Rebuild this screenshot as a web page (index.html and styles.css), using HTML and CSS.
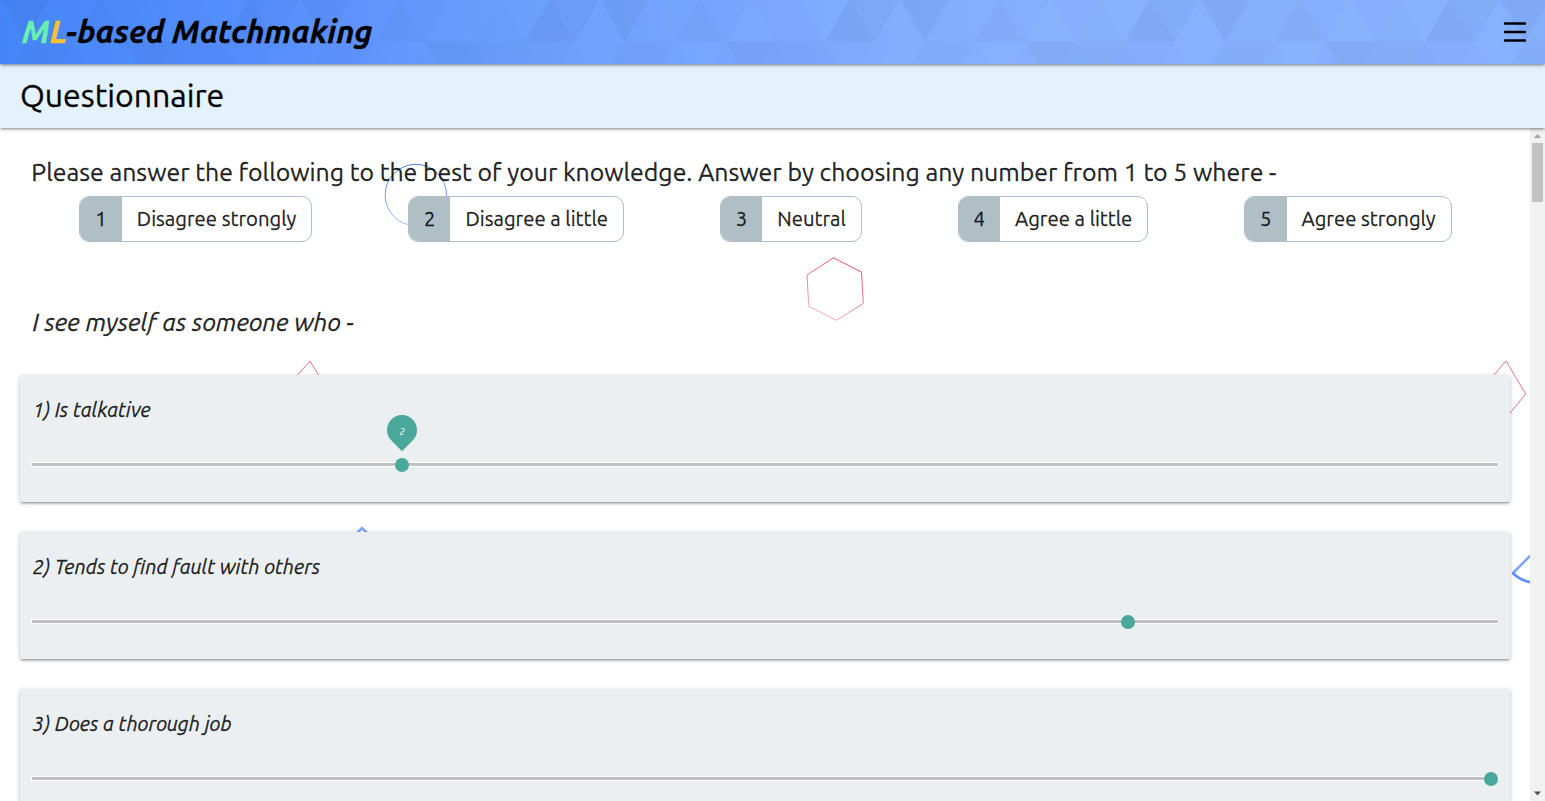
FILE: index.html
```html
<!DOCTYPE html>
<html lang="en">
<head>
<meta charset="utf-8">
<title>ML-based Matchmaking</title>
<link rel="stylesheet" href="styles.css">
</head>
<body>
<header class="topbar">
  <svg class="topbar-pattern" width="100%" height="64" aria-hidden="true">
    <defs>
      <pattern id="tri" x="-75" y="-1.6" width="300" height="86.6" patternUnits="userSpaceOnUse">
        <g fill="#1a3a7a" opacity=".65">
          <path d="M0 43.3 25 0 50 43.3z" fill-opacity=".11"/>
          <path d="M25 0H75L50 43.3z" fill-opacity=".085"/>
          <path d="M75 0H125L100 43.3z" fill-opacity=".11"/>
          <path d="M-25 0H25L0 43.3zM275 0H325L300 43.3z" fill-opacity=".01"/>
          <path d="M50 43.3 75 0 100 43.3z" fill-opacity=".015"/>
          <path d="M100 43.3 125 0 150 43.3z" fill-opacity=".035"/>
          <path d="M125 0H175L150 43.3z" fill-opacity=".035"/>
          <path d="M150 43.3 175 0 200 43.3z" fill-opacity=".075"/>
          <path d="M175 0H225L200 43.3z" fill-opacity=".04"/>
          <path d="M200 43.3 225 0 250 43.3z" fill-opacity=".01"/>
          <path d="M225 0H275L250 43.3z" fill-opacity=".02"/>
          <path d="M250 43.3 275 0 300 43.3z" fill-opacity=".03"/>
          <path d="M0 43.3H50L25 86.6z" fill-opacity=".045"/>
          <path d="M25 86.6 50 43.3 75 86.6z" fill-opacity=".025"/>
          <path d="M50 43.3H100L75 86.6z" fill-opacity=".015"/>
          <path d="M75 86.6 100 43.3 125 86.6z" fill-opacity=".08"/>
          <path d="M100 43.3H150L125 86.6z" fill-opacity=".07"/>
          <path d="M125 86.6 150 43.3 175 86.6z" fill-opacity=".03"/>
          <path d="M150 43.3H200L175 86.6z" fill-opacity=".01"/>
          <path d="M175 86.6 200 43.3 225 86.6z" fill-opacity=".02"/>
          <path d="M200 43.3H250L225 86.6z" fill-opacity=".1"/>
          <path d="M225 86.6 250 43.3 275 86.6z" fill-opacity=".085"/>
          <path d="M250 43.3H300L275 86.6z" fill-opacity=".07"/>
          <path d="M-25 86.6 0 43.3 25 86.6zM275 86.6 300 43.3 325 86.6z" fill-opacity=".055"/>
        </g>
      </pattern>
    </defs>
    <rect width="100%" height="64" fill="url(#tri)"/>
  </svg>
  <h1 class="brand"><span class="brand-m">M</span><span class="brand-l">L</span>-based Matchmaking</h1>
  <svg class="menu-icon" width="24" height="22" viewBox="0 0 24 22" fill="none" stroke="#000" stroke-width="2.4" stroke-linecap="round"><path d="M2 2.5H22M2 11H22M2 19.5H22"/></svg>
</header>
<div class="subbar"><h2 class="page-title">Questionnaire</h2></div>
<div class="viewport">
  <main class="content">
    <svg class="shapes" width="1530" height="673" viewBox="0 128 1530 673" fill="none" aria-hidden="true">
      <defs>
        <linearGradient id="blue" x1="0" y1="0" x2="0" y2="1"><stop stop-color="#4b7cf3"/><stop offset="1" stop-color="#9fc0ff"/></linearGradient>
        <linearGradient id="red" x1=".7" y1="0" x2=".3" y2="1"><stop stop-color="#e8465c"/><stop offset=".5" stop-color="#ee7d90"/><stop offset="1" stop-color="#f7b5b2"/></linearGradient>
      </defs>
      <circle cx="415.8" cy="195" r="30.7" stroke="url(#blue)"/>
      <path d="M833.5 257.8 861.5 272 863.3 303.5 836.5 320.3 808.8 306.3 807 275z" stroke="url(#red)"/>
      <path d="M297.7 375 310 361 318.5 375" stroke="#ec7487"/>
      <path d="M1494 375 1506 361 1525.7 394 1510 413" stroke="#ec7487"/>
      <path d="M357 533 362 528 367 533" stroke="#7ba7fb" stroke-width="2.6"/>
      <path d="M1532 554 1512.5 573.5" stroke="#7ba7fb" stroke-width="2.6"/>
      <path d="M1512.5 573Q1521 581 1532 582.5" stroke="#5f90f8" stroke-width="2.6"/>
    </svg>
    <p class="lead">Please answer the following to the best of your knowledge. Answer by choosing any number from 1 to 5 where -</p>
    <div class="legend">
      <div class="chip"><span class="chip-num">1</span><span class="chip-label">Disagree strongly</span></div>
      <div class="chip"><span class="chip-num">2</span><span class="chip-label">Disagree a little</span></div>
      <div class="chip"><span class="chip-num">3</span><span class="chip-label">Neutral</span></div>
      <div class="chip"><span class="chip-num">4</span><span class="chip-label">Agree a little</span></div>
      <div class="chip"><span class="chip-num">5</span><span class="chip-label">Agree strongly</span></div>
    </div>
    <p class="prompt">I see myself as someone who -</p>
    <section class="card">
      <p class="question">1) Is talkative</p>
      <div class="track"><span class="thumb thumb-2"><svg class="pin" width="30" height="37" viewBox="0 0 30 37"><path d="M15 36.2 4.4 25.6A15 15 0 1 1 25.6 25.6z" fill="#4aa79b"/></svg><span class="pin-value">2</span></span></div>
    </section>
    <section class="card">
      <p class="question">2) Tends to find fault with others</p>
      <div class="track"><span class="thumb thumb-4"></span></div>
    </section>
    <section class="card">
      <p class="question">3) Does a thorough job</p>
      <div class="track"><span class="thumb thumb-5"></span></div>
    </section>
  </main>
  <div class="scrollbar">
    <svg width="15" height="15"><path d="M4 10H11L7.5 6z" fill="#a3a3a3"/></svg>
    <div class="scroll-thumb"></div>
    <svg width="15" height="15"><path d="M4 5.5H11L7.5 9.5z" fill="#505050"/></svg>
  </div>
</div>
</body>
</html>
```
FILE: styles.css
```css
* { box-sizing: border-box; }
body {
  margin: 0;
  height: 801px;
  overflow: hidden;
  display: flex;
  flex-direction: column;
  font-family: Ubuntu, "Noto Sans", sans-serif;
  color: rgba(0, 0, 0, .87);
  background: #fff;
  -webkit-text-stroke: .3px;
}
h1, h2, p { margin: 0; font-weight: 400; }

.topbar, .subbar {
  flex: none;
  height: 64px;
  display: flex;
  align-items: center;
  position: relative;
  box-shadow: 0 2px 2px 0 rgba(0,0,0,.14), 0 3px 1px -2px rgba(0,0,0,.12), 0 1px 5px 0 rgba(0,0,0,.2);
}
.topbar {
  z-index: 3;
  justify-content: space-between;
  padding: 0 18px 0 22px;
  background: linear-gradient(90deg, #4587fa 0, #568fff 250px, #6598ff 400px, #70a1ff 560px, #7ba9ff 760px, #83afff 900px, #87b2ff 1040px);
}
.topbar-pattern { position: absolute; left: 0; top: 0; }
.brand {
  position: relative;
  font-size: 31.6px;
  font-weight: 700;
  font-style: italic;
  line-height: 64px;
  color: #000;
}
.brand-m { color: #69f0ae; }
.brand-l { color: #fbc02d; }
.menu-icon { position: relative; }
.subbar { z-index: 2; padding-left: 20px; background: #e3f2fd; }
.page-title { font-size: 32px; line-height: 62px; height: 64px; color: #000; }

.viewport { flex: 1; min-height: 0; display: flex; }
.content { flex: 1; position: relative; padding: 24px 20px 0; overflow: hidden; }
.shapes { position: absolute; left: 0; top: 0; }
.lead, .prompt { position: relative; font-size: 24.86px; line-height: 40px; padding-left: 11.3px; }
.prompt { margin-top: 60px; font-size: 24.75px; font-style: italic; padding-left: 12.5px; }
.legend { position: relative; display: flex; justify-content: space-around; margin: 4px 10.5px 0 11.5px; }
.chip {
  height: 46px;
  display: flex;
  border: 1px solid #b0bec5;
  border-radius: 10px;
  overflow: hidden;
  background: #fff;
  font-size: 20.3px;
  line-height: 44px;
}
.chip-num { padding: 0 15px; background: #b0bec5; }
.chip-label { padding: 0 15px; }
.card {
  position: relative;
  height: 127px;
  margin-bottom: 30px;
  padding: 20px 12px 0;
  border-radius: 2px;
  background: #ebeff2;
  box-shadow: 0 2px 2px 0 rgba(0,0,0,.14), 0 3px 1px -2px rgba(0,0,0,.12), 0 1px 5px 0 rgba(0,0,0,.2);
}
.prompt + .card { margin-top: 33px; }
.question { font-size: 20.1px; line-height: 30px; font-style: italic; padding-left: .4px; }
.track {
  position: relative;
  height: 5px;
  margin: 37px -1px 0;
  border: 1px solid #fff;
  background: #c2c0c2;
}
.thumb {
  position: absolute;
  top: -5px;
  width: 14px;
  height: 14px;
  border-radius: 50%;
  background: #4aa79b;
}
.thumb-2 { left: calc(25% - 3.5px); }
.thumb-4 { left: calc(75% - 10.5px); }
.thumb-5 { left: calc(100% - 14px); }
.pin { position: absolute; left: -8px; top: -43px; }
.pin-value {
  position: absolute;
  left: -8px;
  top: -43px;
  width: 30px;
  text-align: center;
  font-size: 10px;
  line-height: 34px;
  font-style: italic;
  color: #fff;
  -webkit-text-stroke: 0;
}
.scrollbar {
  width: 15px;
  display: flex;
  flex-direction: column;
  align-items: center;
  background: #f1f1f1;
}
.scroll-thumb { width: 11px; height: 59px; background: #c1c1c1; margin-bottom: auto; }
```
